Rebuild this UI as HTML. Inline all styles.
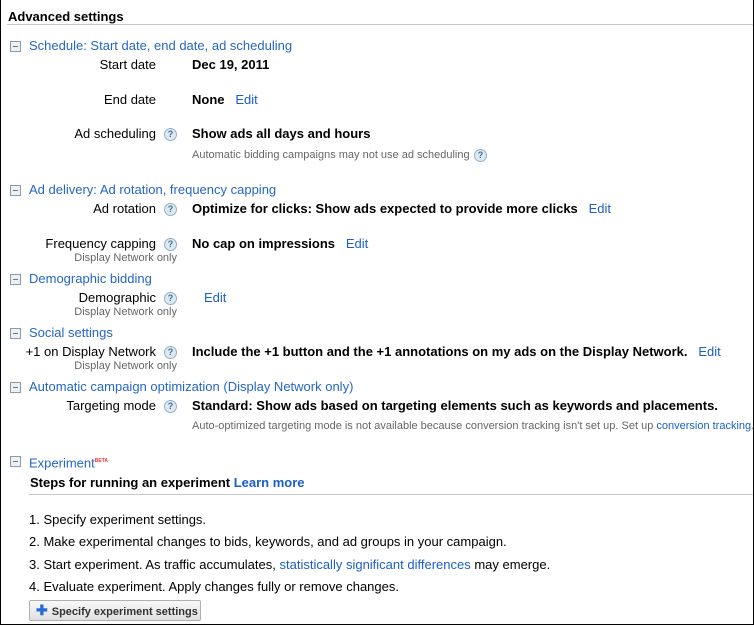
<!DOCTYPE html>
<html><head><style>
body{margin:0;width:754px;height:626px;position:relative;overflow:hidden;background:#fff;font-family:"Liberation Sans",Arial,sans-serif;font-size:13px;color:#000}
.frame{position:absolute;left:0;top:0;width:752px;height:624px;border:1px solid #000;border-top:none}
.w{position:absolute;left:0;top:1px;width:754px;height:626px}
.a{position:absolute;white-space:nowrap;line-height:16px}
.lbl{position:absolute;right:598px;white-space:nowrap;line-height:16px;text-align:right}
.b{font-weight:bold}
.l{color:#1a5fc8}
.s{font-size:11px;color:#666}
.sec{color:#2466c6}
.mb{position:absolute;left:10px;width:9px;height:9px;border:1px solid #8a9aaa;background:#eef1f4}
.mb:after{content:"";position:absolute;left:2px;top:4px;width:5px;height:1px;background:#6a7a8a}
.q{position:absolute;width:11px;height:11px;border:1px solid #8fb0c8;border-radius:50%;background:#dde9f2;font-size:9px;color:#4b6f8c;text-align:center;line-height:11px;font-weight:bold}
</style></head><body>
<div class="frame"></div>
<div class="w">
<div class="a b" style="left:8px;top:8px">Advanced settings</div>
<div style="position:absolute;left:7px;top:23px;width:746px;height:1px;background:#c8c8c8"></div>

<div class="mb" style="top:40px"></div><div class="a sec" style="left:29px;top:37px">Schedule: Start date, end date, ad scheduling</div>
<div class="lbl" style="top:56px">Start date</div><div class="a b" style="left:192px;top:56px">Dec 19, 2011</div>
<div class="lbl" style="top:91px">End date</div><div class="a" style="left:192px;top:91px"><b>None</b>&nbsp;&nbsp; <span class="l">Edit</span></div>
<div class="lbl" style="top:125px">Ad scheduling</div><div class="q" style="left:164px;top:127px">?</div><div class="a b" style="left:192px;top:125px">Show ads all days and hours</div>
<div class="a s" style="left:192px;top:146px">Automatic bidding campaigns may not use ad scheduling</div><div class="q" style="left:474px;top:148px">?</div>

<div class="mb" style="top:184px"></div><div class="a sec" style="left:29px;top:181px">Ad delivery: Ad rotation, frequency capping</div>
<div class="lbl" style="top:200px">Ad rotation</div><div class="q" style="left:164px;top:202px">?</div><div class="a" style="left:192px;top:200px"><b>Optimize for clicks: Show ads expected to provide more clicks</b>&nbsp;&nbsp; <span class="l">Edit</span></div>
<div class="lbl" style="top:235px">Frequency capping</div><div class="q" style="left:164px;top:237px">?</div><div class="a" style="left:192px;top:235px"><b>No cap on impressions</b>&nbsp;&nbsp; <span class="l">Edit</span></div>
<div class="lbl s" style="top:249px;right:577px">Display Network only</div>

<div class="mb" style="top:273px"></div><div class="a sec" style="left:29px;top:270px">Demographic bidding</div>
<div class="lbl" style="top:289px">Demographic</div><div class="q" style="left:164px;top:291px">?</div><div class="a l" style="left:204px;top:289px">Edit</div>
<div class="lbl s" style="top:303px;right:577px">Display Network only</div>

<div class="mb" style="top:327px"></div><div class="a sec" style="left:29px;top:324px">Social settings</div>
<div class="lbl" style="top:343px">+1 on Display Network</div><div class="q" style="left:164px;top:345px">?</div><div class="a" style="left:192px;top:343px"><b>Include the +1 button and the +1 annotations on my ads on the Display Network.</b>&nbsp;&nbsp; <span class="l">Edit</span></div>
<div class="lbl s" style="top:357px;right:577px">Display Network only</div>

<div class="mb" style="top:381px"></div><div class="a sec" style="left:29px;top:378px">Automatic campaign optimization (Display Network only)</div>
<div class="lbl" style="top:397px">Targeting mode</div><div class="q" style="left:164px;top:399px">?</div><div class="a b" style="left:192px;top:397px">Standard: Show ads based on targeting elements such as keywords and placements.</div>
<div class="a s" style="left:192px;top:417px">Auto-optimized targeting mode is not available because conversion tracking isn't set up. Set up <span class="l">conversion tracking</span>.</div>

<div class="mb" style="top:455px"></div><div class="a sec" style="left:29px;top:452px">Experiment<sup style="font-size:5px;color:#e33;font-weight:bold">BETA</sup></div>
<div class="a" style="left:30px;top:474px"><b>Steps for running an experiment</b> <span class="l b">Learn more</span></div>
<div style="position:absolute;left:29px;top:493px;width:724px;height:1px;background:#c8c8c8"></div>
<div class="a" style="left:29px;top:511px">1. Specify experiment settings.</div>
<div class="a" style="left:29px;top:533px">2. Make experimental changes to bids, keywords, and ad groups in your campaign.</div>
<div class="a" style="left:29px;top:556px">3. Start experiment. As traffic accumulates, <span class="l">statistically significant differences</span> may emerge.</div>
<div class="a" style="left:29px;top:578px">4. Evaluate experiment. Apply changes fully or remove changes.</div>
<div style="position:absolute;left:29px;top:599px;width:170px;height:19px;border:1px solid #b0b0b0;border-radius:2px;background:linear-gradient(#f8f8f8,#e0e0e0);font-size:11px;font-weight:bold;line-height:19px;color:#333"><span style="color:#2a6ad0;font-size:14px;margin:0 4px 0 6px">✚</span>Specify experiment settings</div>
</div>
</body></html>
